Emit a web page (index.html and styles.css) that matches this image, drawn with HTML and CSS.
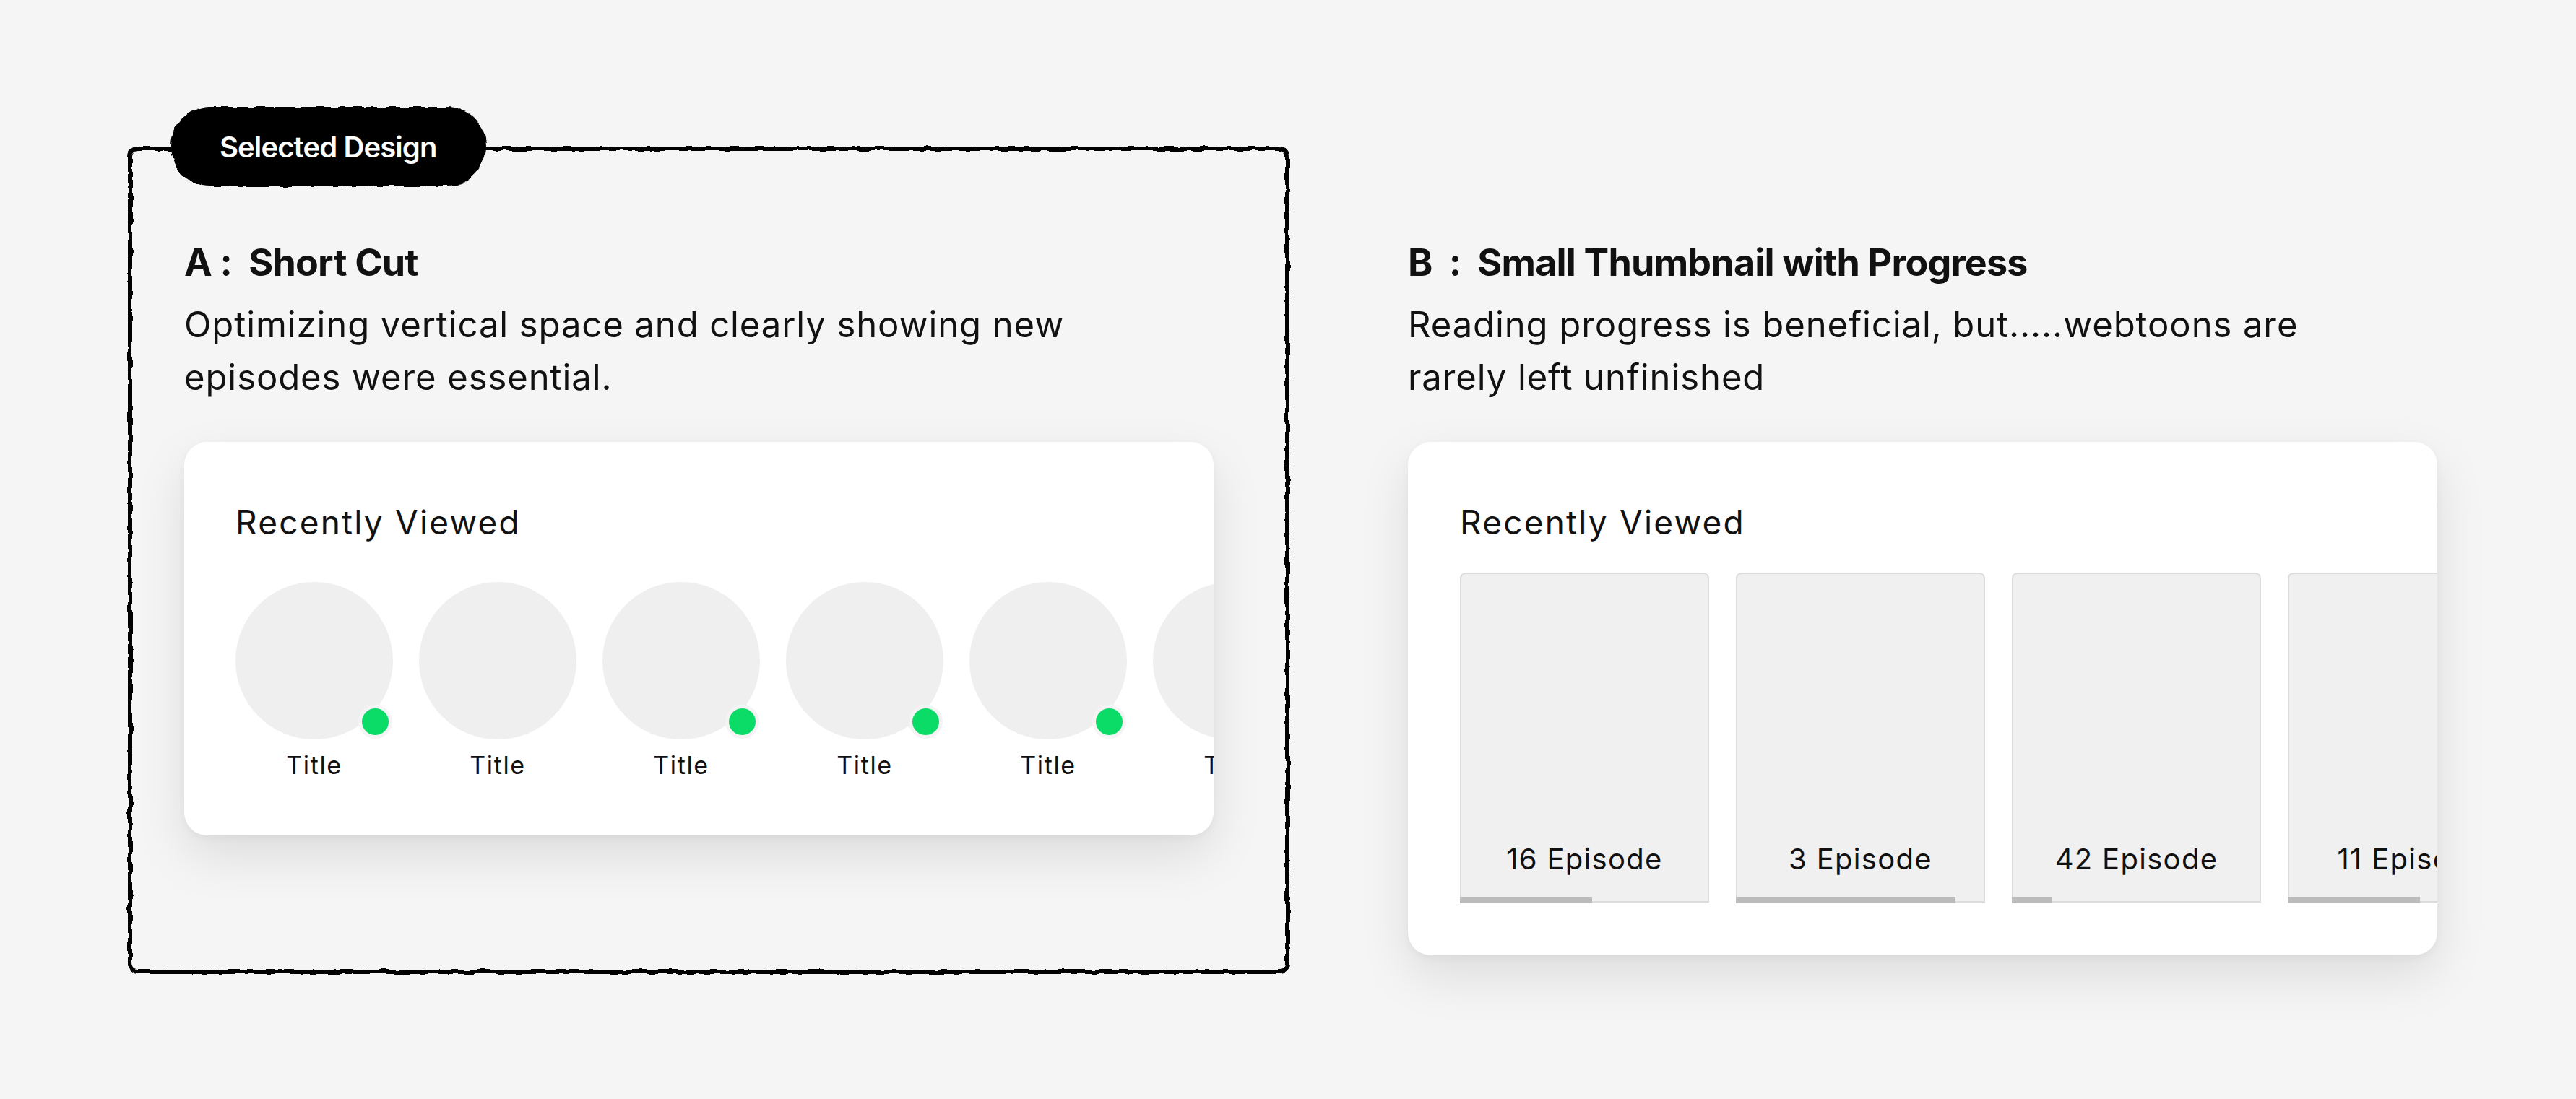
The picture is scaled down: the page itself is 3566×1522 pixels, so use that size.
FILE: index.html
```html
<!DOCTYPE html>
<html>
<head>
  <title>Recently Viewed - Design Options</title>
  <link rel="stylesheet" href="styles.css">
</head>
<body>
  <svg class="defs" width="0" height="0" aria-hidden="true">
    <filter id="rough">
      <feTurbulence type="fractalNoise" baseFrequency="0.06" numOctaves="2" seed="4" result="noise"/>
      <feDisplacementMap in="SourceGraphic" in2="noise" scale="6" xChannelSelector="R" yChannelSelector="G"/>
    </filter>
  </svg>

  <div class="page">
    <!-- Option A - selected -->
    <div class="option selected">
      <div class="badge"><span>Selected Design</span></div>
      <h2 class="option-title">A :&nbsp; Short Cut</h2>
      <p class="option-desc">Optimizing vertical space and clearly showing new episodes were essential.</p>

      <div class="card card-a">
        <div class="card-title">Recently Viewed</div>
        <div class="shortcuts">
          <div class="shortcut">
            <div class="avatar"><span class="new-dot"></span></div>
            <div class="shortcut-label">Title</div>
          </div>
          <div class="shortcut">
            <div class="avatar"></div>
            <div class="shortcut-label">Title</div>
          </div>
          <div class="shortcut">
            <div class="avatar"><span class="new-dot"></span></div>
            <div class="shortcut-label">Title</div>
          </div>
          <div class="shortcut">
            <div class="avatar"><span class="new-dot"></span></div>
            <div class="shortcut-label">Title</div>
          </div>
          <div class="shortcut">
            <div class="avatar"><span class="new-dot"></span></div>
            <div class="shortcut-label">Title</div>
          </div>
          <div class="shortcut">
            <div class="avatar"></div>
            <div class="shortcut-label">Title</div>
          </div>
        </div>
      </div>
    </div>

    <!-- Option B -->
    <div class="option">
      <h2 class="option-title">B&nbsp; :&nbsp; Small Thumbnail with Progress</h2>
      <p class="option-desc">Reading progress is beneficial, but.....webtoons are rarely left unfinished</p>

      <div class="card card-b">
        <div class="card-title">Recently Viewed</div>
        <div class="thumbs">
          <div class="thumb">
            <div class="thumb-label">16 Episode</div>
            <div class="progress"><div class="progress-fill" style="width: 53%"></div></div>
          </div>
          <div class="thumb">
            <div class="thumb-label">3 Episode</div>
            <div class="progress"><div class="progress-fill" style="width: 88%"></div></div>
          </div>
          <div class="thumb">
            <div class="thumb-label">42 Episode</div>
            <div class="progress"><div class="progress-fill" style="width: 16%"></div></div>
          </div>
          <div class="thumb">
            <div class="thumb-label">11 Episode</div>
            <div class="progress"><div class="progress-fill" style="width: 53%"></div></div>
          </div>
        </div>
      </div>
    </div>
  </div>
</body>
</html>
```

FILE: styles.css
```css
html,
body {
  min-height: 100%;
}

body {
  margin: 0;
  background: #f5f5f5;
  color: #111;
  font-family: "Inter", "Liberation Sans", sans-serif;
}

.defs {
  position: absolute;
  width: 0;
  height: 0;
}

.page {
  display: flex;
  align-items: flex-start;
  gap: 164px;
  padding: 203px 0 170px 177px;
}

.option {
  flex: 0 0 auto;
  width: 1425px;
  padding-top: 130px;
}

.option.selected {
  position: relative;
  width: 1608px;
  height: 1146px;
  box-sizing: border-box;
  padding: 130px 105px 0 78px;
}

/* hand drawn frame */
.option.selected::before {
  content: "";
  position: absolute;
  inset: 0;
  border: 6px solid #000;
  border-radius: 14px;
  filter: url(#rough);
  pointer-events: none;
}

.badge {
  position: absolute;
  left: 59px;
  top: -55px;
  height: 110px;
  padding: 0 68px;
  display: flex;
  align-items: center;
  z-index: 1;
}

.badge::before {
  content: "";
  position: absolute;
  inset: 0;
  background: #000;
  border-radius: 55px;
  filter: url(#rough);
}

.badge span {
  position: relative;
  color: #fff;
  font-size: 40px;
  font-weight: 600;
  letter-spacing: -0.9px;
}

.option-title {
  margin: 0;
  font-size: 52px;
  line-height: 1.2;
  font-weight: 700;
  letter-spacing: -0.8px;
}

.option-desc {
  margin: 18px 0 0;
  max-width: 1300px;
  font-size: 49px;
  line-height: 73px;
  font-weight: 400;
  letter-spacing: 0.9px;
}

.card {
  margin-top: 53px;
  background: #fff;
  border-radius: 32px;
  box-shadow: 0 28px 70px rgba(0, 0, 0, 0.1), 0 4px 12px rgba(0, 0, 0, 0.04);
  overflow: hidden;
}

.card-a {
  padding: 84px 0 77px 71px;
}

.card-b {
  padding: 84px 0 72px 72px;
}

.card-title {
  font-size: 46px;
  line-height: 54px;
  letter-spacing: 2.2px;
  color: #111;
}

.card-a .card-title {
  margin-bottom: 56px;
}

.card-b .card-title {
  margin-bottom: 43px;
}

.shortcuts {
  display: flex;
  gap: 36px;
}

.shortcut {
  flex: 0 0 218px;
}

.avatar {
  position: relative;
  width: 218px;
  height: 218px;
  border-radius: 50%;
  background: #efefef;
}

.new-dot {
  position: absolute;
  right: 1px;
  bottom: 1px;
  width: 37px;
  height: 37px;
  border-radius: 50%;
  background: #0bdc68;
  border: 5px solid #f4f4f4;
}

.shortcut-label {
  margin-top: 15px;
  font-size: 34px;
  line-height: 41px;
  text-align: center;
  letter-spacing: 1.6px;
}

.thumbs {
  display: flex;
  gap: 37px;
}

.thumb {
  flex: 0 0 345px;
  height: 458px;
  box-sizing: border-box;
  background: #f0f0f0;
  border: 2px solid #dcdcdc;
  border-bottom: none;
  border-radius: 8px 8px 0 0;
  display: flex;
  flex-direction: column;
  justify-content: flex-end;
}

.thumb-label {
  margin-bottom: 28px;
  font-size: 40px;
  line-height: 48px;
  text-align: center;
  letter-spacing: 1.3px;
  white-space: nowrap;
  overflow: hidden;
}

.progress {
  height: 9px;
  margin: 0 -2px;
  background: linear-gradient(to top, #dcdcdc 3px, transparent 3px);
}

.progress-fill {
  height: 100%;
  background: #bcbcbc;
}
```
